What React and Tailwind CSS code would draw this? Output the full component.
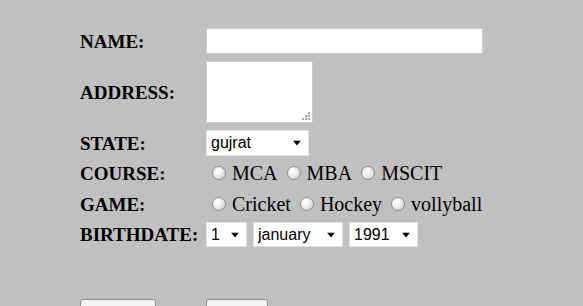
import { useState } from "react";

const serif = { fontFamily: '"Liberation Serif", "Times New Roman", serif' };

function Arrow() {
  return (
    <svg width="8" height="5" viewBox="0 0 8 5" className="pointer-events-none absolute right-[8px] top-1/2 -translate-y-1/2">
      <path d="M0 0 H8 L4 5 Z" fill="#000" />
    </svg>
  );
}

function Select({ width, height, value, options }) {
  return (
    <div className="relative" style={{ width }}>
      <select
        defaultValue={value}
        className="w-full appearance-none bg-white border border-[#e1e1e1] pl-[4px] text-[16px] leading-none text-black outline-none"
        style={{ height, fontFamily: '"Liberation Sans", Arial, sans-serif' }}
      >
        {options.map((o) => (
          <option key={o}>{o}</option>
        ))}
      </select>
      <Arrow />
    </div>
  );
}

function Radio({ name, label, first }) {
  return (
    <label className={`flex items-center ${first ? "ml-[6px]" : "ml-[9px]"}`}>
      <input
        type="radio"
        name={name}
        className="appearance-none w-[14px] h-[14px] rounded-full border border-[#8e8e8e] bg-[radial-gradient(circle_at_35%_35%,#ffffff_0%,#f2f2f2_35%,#c4c4c4_100%)] mr-[6px]"
      />
      <span className="text-[20px] text-black leading-none" style={serif}>
        {label}
      </span>
    </label>
  );
}

function Label({ children }) {
  return (
    <div className="w-[126px] shrink-0 text-[19px] font-bold text-black leading-none" style={serif}>
      {children}
    </div>
  );
}

export default function App() {
  const [nombre, setNombre] = useState("");

  const dias = Array.from({ length: 31 }, (_, i) => String(i + 1));
  const meses = ["january", "february", "march", "april", "may", "june", "july", "august", "september", "october", "november", "december"];
  const años = ["1991", "1992", "1993", "1994", "1995"];

  return (
    <div className="w-[583px] h-[306px] overflow-hidden bg-[#c0c0c0] pl-[80px] pt-[28px]">
      <div className="flex items-center h-[26px]">
        <Label>NAME:</Label>
        <input
          value={nombre}
          onChange={(e) => setNombre(e.target.value)}
          className="w-[277px] h-[26px] bg-white border border-[#c9ced6] outline-none"
        />
      </div>

      <div className="flex items-center h-[62px] mt-[7px]">
        <Label>ADDRESS:</Label>
        <div className="relative w-[107px] h-[62px]">
          <textarea className="block w-full h-full resize-none bg-white border border-[#c9ced6] outline-none" />
          <div className="absolute right-[3px] bottom-[3px] grid grid-cols-3 gap-[1px] w-[8px]">
            <span />
            <span />
            <span className="w-[2px] h-[2px] bg-[#a8a8a8]" />
            <span />
            <span className="w-[2px] h-[2px] bg-[#a8a8a8]" />
            <span className="w-[2px] h-[2px] bg-[#a8a8a8]" />
            <span className="w-[2px] h-[2px] bg-[#a8a8a8]" />
            <span className="w-[2px] h-[2px] bg-[#a8a8a8]" />
            <span className="w-[2px] h-[2px] bg-[#a8a8a8]" />
          </div>
        </div>
      </div>

      <div className="flex items-center h-[26px] mt-[7px]">
        <Label>STATE:</Label>
        <Select width="103px" height="26px" value="gujrat" options={["gujrat", "maharashtra", "rajasthan"]} />
      </div>

      <div className="flex items-center h-[34px]">
        <Label>COURSE:</Label>
        <Radio name="course" label="MCA" first />
        <Radio name="course" label="MBA" />
        <Radio name="course" label="MSCIT" />
      </div>

      <div className="flex items-center h-[28px]">
        <Label>GAME:</Label>
        <Radio name="game" label="Cricket" first />
        <Radio name="game" label="Hockey" />
        <Radio name="game" label="vollyball" />
      </div>

      <div className="flex items-center h-[33px]">
        <Label>BIRTHDATE:</Label>
        <div className="flex gap-[6px]">
          <Select width="41px" height="25px" value="1" options={dias} />
          <Select width="90px" height="25px" value="january" options={meses} />
          <Select width="69px" height="25px" value="1991" options={años} />
        </div>
      </div>

      <div className="flex mt-[48px]">
        <div className="w-[126px] shrink-0">
          <button className="w-[76px] h-[26px] bg-[#f3f3f3] border border-[#8c8c8c] rounded-[3px]" />
        </div>
        <button className="w-[62px] h-[26px] bg-[#f3f3f3] border border-[#8c8c8c] rounded-[3px]" />
      </div>
    </div>
  );
}
